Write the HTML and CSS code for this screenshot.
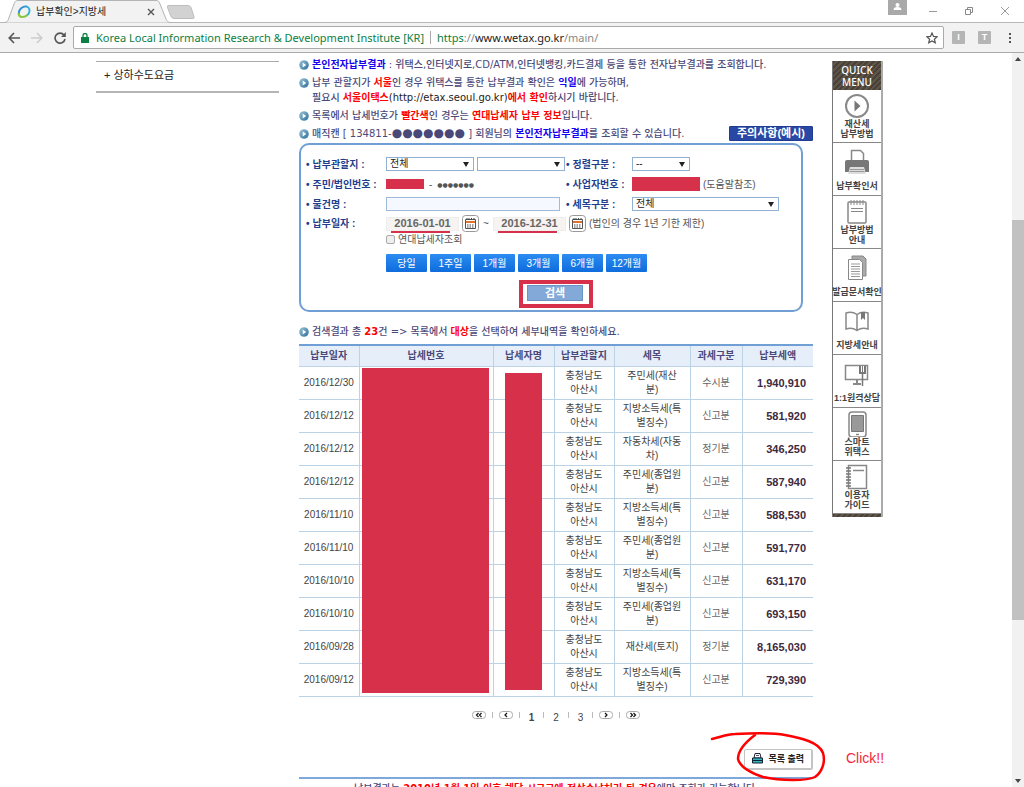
FILE: index.html
```
<!DOCTYPE html>
<html lang="ko">
<head>
  <meta charset="utf-8" />
  <meta name="viewport" content="width=device-width, initial-scale=1.0"/>
  <title>납부확인>지방세</title>
  <link rel="stylesheet" href="styles.css">
</head>
<body>

  <!-- Icons -->
  <svg class="defs" aria-hidden="true">
    <defs>
      <linearGradient id="bulletFill" x1="0" y1="0" x2="1" y2="1">
        <stop offset="0" stop-color="#9cc3d6"/>
        <stop offset="1" stop-color="#2a6f9c"/>
      </linearGradient>
      <symbol id="bullet" viewBox="0 0 10 10">
        <circle cx="5" cy="5" r="4.8" fill="url(#bulletFill)"/>
        <path d="M3.7 2.4 7.2 5 3.7 7.6z" fill="#fff"/>
      </symbol>
      <symbol id="calendar" viewBox="0 0 17 17">
        <rect x=".5" y=".5" width="16" height="16" rx="3" fill="#fff" stroke="#999"/>
        <path d="M3.5 4.5h10v9h-10z" fill="#fff" stroke="#555"/>
        <path d="M4 6h9v2H4z" fill="#e0722c"/>
        <path d="M5 3v2M7 3v2M9.500 3v2M12 3v2M5 10h1.500M7.500 10h1.500M10 10h1.500M5 12h1.500M7.500 12h1.500M10 12h1.500" stroke="#444"/>
      </symbol>
    </defs>
  </svg>

  <header class="browser">
    <div class="tab-strip">
      <div class="tab">
        <svg class="tab-shape" viewBox="0 0 168 23" aria-hidden="true">
          <path d="M0 22.500C3 22.500 3.500 21.500 4.500 19L10 4C11 1 12 .5 14 .5H152C154 .5 155 1 156 4L162 19C163 21.500 164 22.500 168 22.500" fill="#f2f2f2" stroke="#b4b4b4"/>
        </svg>
        <svg class="favicon" viewBox="0 0 14 14" aria-hidden="true">
          <path d="M2 9C1 4 6 1 10 1.500" fill="none" stroke="#2f8fd8" stroke-width="1.800"/>
          <path d="M9.500 1.500C14 3 13 8 10 10.500" fill="none" stroke="#28b3d6" stroke-width="1.800"/>
          <path d="M1.500 8C1.500 13 7 13 10.500 10" fill="none" stroke="#8cc63f" stroke-width="2"/>
        </svg>
        <span class="tab-title">납부확인&gt;지방세</span>
        <button class="plain tab-close" aria-label="탭 닫기">
          <svg width="8" height="8" viewBox="0 0 8 8"><path d="M1 1l6 6M7 1L1 7" stroke="#555" stroke-width="1.400"/></svg>
        </button>
      </div>
      <button class="plain new-tab" aria-label="새 탭">
        <svg width="28" height="14" viewBox="0 0 28 14"><path d="M1 .5h20q2 0 3 2l3 9q.5 2-1 2H7q-2 0-3-2L.5 2.500Q0 .5 1 .5z" fill="#d2d2d2" stroke="#bdbdbd"/></svg>
      </button>
      <div class="window-buttons">
        <button class="plain user" aria-label="사용자">
          <svg width="19" height="15" viewBox="0 0 19 15"><path d="M0 0h19v15H0z" fill="#a9a9a9"/><circle cx="9.500" cy="5" r="2" fill="#fff"/><path d="M5.500 10q0-3 4-3t4 3z" fill="#fff"/></svg>
        </button>
        <button class="plain" aria-label="최소화"><svg width="10" height="10" viewBox="0 0 10 10"><path d="M1 5.500h8" stroke="#999"/></svg></button>
        <button class="plain" aria-label="이전 크기로"><svg width="10" height="10" viewBox="0 0 10 10"><path d="M1.500 3.500h5v5h-5zM3.500 3V1.500h5v5H7" fill="none" stroke="#888"/></svg></button>
        <button class="plain" aria-label="닫기"><svg width="10" height="10" viewBox="0 0 10 10"><path d="M1 1l8 8M9 1L1 9" stroke="#999"/></svg></button>
      </div>
    </div>
    <div class="toolbar">
      <button class="plain" aria-label="뒤로"><svg width="12" height="12" viewBox="0 0 12 12"><path d="M6 1L1.200 6 6 11M1.500 6H12" fill="none" stroke="#555" stroke-width="1.600"/></svg></button>
      <button class="plain" aria-label="앞으로"><svg width="12" height="12" viewBox="0 0 12 12"><path d="M6 1l4.800 5L6 11M10.500 6H0" fill="none" stroke="#ccc" stroke-width="1.600"/></svg></button>
      <button class="plain" aria-label="새로고침"><svg width="12" height="12" viewBox="0 0 12 12"><path d="M10 3A5 5 0 1 0 11 7" fill="none" stroke="#555" stroke-width="1.600"/><path d="M11.800 0v5H7z" fill="#555"/></svg></button>
      <div class="omnibox">
        <svg width="8" height="10" viewBox="0 0 8 10" aria-hidden="true"><path d="M0 4h8v6H0z" fill="#0b8043"/><path d="M2 4V2.500a2 2 0 0 1 4 0V4" fill="none" stroke="#0b8043" stroke-width="1.300"/></svg>
        <span class="company">Korea Local Information Research &amp; Development Institute [KR]</span>
        <span class="url" role="textbox" aria-label="주소"><span class="scheme">https</span>://<b>www.wetax.go.kr</b>/main/</span>
        <button class="plain star" aria-label="북마크"><svg width="12" height="12" viewBox="0 0 12 12"><path d="M6 1l1.500 3.400 3.700.3-2.800 2.500.9 3.600L6 8.900l-3.300 1.900.9-3.600L.8 4.700l3.700-.3z" fill="none" stroke="#555" stroke-width="1.200"/></svg></button>
      </div>
      <button class="plain ext">I</button>
      <button class="plain ext">T</button>
      <button class="plain" aria-label="메뉴"><svg width="12" height="12" viewBox="0 0 12 12"><path d="M5 1h2v2H5zM5 5h2v2H5zM5 9h2v2H5z" fill="#555"/></svg></button>
    </div>
  </header>

  <div class="viewport">
    <div class="page">

      <nav class="side-menu">
        <a href="#"><span class="plus">+</span>상하수도요금</a>
      </nav>

      <main class="content">
        <ul class="notes">
          <li><svg class="bullet"><use href="#bullet"/></svg><p><b class="blue">본인전자납부결과</b> : 위택스,인터넷지로,CD/ATM,인터넷뱅킹,카드결제 등을 통한 전자납부결과를 조회합니다.</p></li>
          <li><svg class="bullet"><use href="#bullet"/></svg><p>납부 관할지가 <b class="red">서울</b>인 경우 위택스를 통한 납부결과 확인은 <b class="blue">익일</b>에 가능하며,<br>필요시 <b class="red">서울이택스</b><span class="link">(http://etax.seoul.go.kr)</span><b class="red">에서 확인</b>하시기 바랍니다.</p></li>
          <li><svg class="bullet"><use href="#bullet"/></svg><p>목록에서 납세번호가 <b class="red">빨간색</b>인 경우는 <b class="red">연대납세자 납부 정보</b>입니다.</p></li>
          <li><svg class="bullet"><use href="#bullet"/></svg><p>매직캔 [ 134811-<span class="dots">●●●●●●●</span> ] 회원님의 <b class="blue">본인전자납부결과</b>를 조회할 수 있습니다.</p><button class="example-btn">주의사항(예시)</button></li>
        </ul>

        <form class="search-box">
          <div class="fields">
            <label for="region">납부관할지 :</label>
            <div class="field">
              <select id="region"><option>전체</option></select>
              <select aria-label="세부 관할지"><option></option></select>
            </div>
            <label for="sort">정렬구분 :</label>
            <div class="field"><select id="sort" class="short"><option>--</option></select></div>

            <span class="label">주민/법인번호 :</span>
            <div class="field"><span class="redact id-front"></span><span class="dash">-</span><span class="mask">●●●●●●●</span></div>
            <span class="label">사업자번호 :</span>
            <div class="field"><span class="redact biz-no"></span><span>(도움말참조)</span></div>

            <label for="item">물건명 :</label>
            <div class="field"><input type="text" id="item"></div>
            <label for="tax">세목구분 :</label>
            <div class="field"><select id="tax" class="long"><option>전체</option></select></div>

            <label for="from">납부일자 :</label>
            <div class="field wide">
              <span class="date"><input type="text" id="from" value="2016-01-01"></span>
              <button type="button" class="plain" aria-label="시작일 선택"><svg class="cal"><use href="#calendar"/></svg></button>
              <span class="tilde">~</span>
              <span class="date"><input type="text" aria-label="종료일" value="2016-12-31"></span>
              <button type="button" class="plain" aria-label="종료일 선택"><svg class="cal"><use href="#calendar"/></svg></button>
              <span>(법인의 경우 1년 기한 제한)</span>
            </div>
            <div class="field check"><input type="checkbox" id="joint"><label for="joint" class="joint">연대납세자조회</label></div>
            <div class="field periods">
              <button type="button">당일</button>
              <button type="button">1주일</button>
              <button type="button">1개월</button>
              <button type="button">3개월</button>
              <button type="button">6개월</button>
              <button type="button">12개월</button>
            </div>
          </div>
          <div class="submit-row">
            <div class="submit-mark"><button type="button" class="submit">검색</button></div>
          </div>
        </form>

        <div class="result-title"><svg class="bullet"><use href="#bullet"/></svg><p>검색결과 총 <b class="red">23</b>건 =&gt; 목록에서 <b class="red">대상</b>을 선택하여 세부내역을 확인하세요.</p></div>

        <div class="table-wrap">
          <table>
            <colgroup>
              <col class="c-date"><col class="c-no"><col class="c-name"><col class="c-region"><col class="c-tax"><col class="c-kind"><col class="c-amount">
            </colgroup>
            <thead>
              <tr><th>납부일자</th><th>납세번호</th><th>납세자명</th><th>납부관할지</th><th>세목</th><th>과세구분</th><th>납부세액</th></tr>
            </thead>
            <tbody>
              <tr><td>2016/12/30</td><td></td><td></td><td>충청남도<br>아산시</td><td>주민세(재산<br>분)</td><td class="kind">수시분</td><td class="amount">1,940,910</td></tr>
              <tr><td>2016/12/12</td><td></td><td></td><td>충청남도<br>아산시</td><td>지방소득세(특<br>별징수)</td><td class="kind">신고분</td><td class="amount">581,920</td></tr>
              <tr><td>2016/12/12</td><td></td><td></td><td>충청남도<br>아산시</td><td>자동차세(자동<br>차)</td><td class="kind">정기분</td><td class="amount">346,250</td></tr>
              <tr><td>2016/12/12</td><td></td><td></td><td>충청남도<br>아산시</td><td>주민세(종업원<br>분)</td><td class="kind">신고분</td><td class="amount">587,940</td></tr>
              <tr><td>2016/11/10</td><td></td><td></td><td>충청남도<br>아산시</td><td>지방소득세(특<br>별징수)</td><td class="kind">신고분</td><td class="amount">588,530</td></tr>
              <tr><td>2016/11/10</td><td></td><td></td><td>충청남도<br>아산시</td><td>주민세(종업원<br>분)</td><td class="kind">신고분</td><td class="amount">591,770</td></tr>
              <tr><td>2016/10/10</td><td></td><td></td><td>충청남도<br>아산시</td><td>지방소득세(특<br>별징수)</td><td class="kind">신고분</td><td class="amount">631,170</td></tr>
              <tr><td>2016/10/10</td><td></td><td></td><td>충청남도<br>아산시</td><td>주민세(종업원<br>분)</td><td class="kind">신고분</td><td class="amount">693,150</td></tr>
              <tr><td>2016/09/28</td><td></td><td></td><td>충청남도<br>아산시</td><td>재산세(토지)</td><td class="kind">정기분</td><td class="amount">8,165,030</td></tr>
              <tr><td>2016/09/12</td><td></td><td></td><td>충청남도<br>아산시</td><td>지방소득세(특<br>별징수)</td><td class="kind">신고분</td><td class="amount">729,390</td></tr>
            </tbody>
          </table>
          <div class="redact cover-no"></div>
          <div class="redact cover-name"></div>
        </div>

        <nav class="paging">
          <a href="#" aria-label="처음"><svg width="14" height="8" viewBox="0 0 14 8"><rect x=".5" y=".5" width="13" height="7" rx="3" fill="#fff" stroke="#aaa"/><path d="M6.500 2L4.500 4l2 2M9.500 2l-2 2 2 2" fill="none" stroke="#111" stroke-width="1.200"/></svg></a>
          <i></i>
          <a href="#" aria-label="이전"><svg width="14" height="8" viewBox="0 0 14 8"><rect x=".5" y=".5" width="13" height="7" rx="3" fill="#fff" stroke="#aaa"/><path d="M8 2L6 4l2 2" fill="none" stroke="#111" stroke-width="1.200"/></svg></a>
          <i></i>
          <a href="#" class="num on">1</a>
          <i></i>
          <a href="#" class="num">2</a>
          <i></i>
          <a href="#" class="num">3</a>
          <i></i>
          <a href="#" aria-label="다음"><svg width="14" height="8" viewBox="0 0 14 8"><rect x=".5" y=".5" width="13" height="7" rx="3" fill="#fff" stroke="#aaa"/><path d="M6 2l2 2-2 2" fill="none" stroke="#111" stroke-width="1.200"/></svg></a>
          <i></i>
          <a href="#" aria-label="마지막"><svg width="14" height="8" viewBox="0 0 14 8"><rect x=".5" y=".5" width="13" height="7" rx="3" fill="#fff" stroke="#aaa"/><path d="M4.500 2l2 2-2 2M7.500 2l2 2-2 2" fill="none" stroke="#111" stroke-width="1.200"/></svg></a>
        </nav>

        <div class="actions">
          <button class="print">
            <svg width="11" height="11" viewBox="0 0 11 11" aria-hidden="true"><path d="M3 .5h5l1 4.500H2z" fill="#fff" stroke="#223"/><path d="M.5 5h10v5H.5z" fill="#35b5bd" stroke="#123"/><path d="M1 7.500h9" stroke="#123"/><path d="M4 2.500h3" stroke="#557"/></svg>
            목록 출력
          </button>
          <svg class="scribble" viewBox="0 0 120 54" aria-hidden="true">
            <path d="M3 8C12 6 18 3 26 3C46 2 66 2 76 4C92 7 110 11 114 22C117 32 112 42 106 46C98 50 72 50 54 46C42 42 31 36 29 28C29 18 38 10 46 4"/>
          </svg>
          <span class="click">Click!!</span>
        </div>

        <p class="footnote">납부결과는 <b class="red">2010년 1월 1일 이후 해당 시군구에 정상수납처리 된 경우</b>에만 조회가 가능합니다.</p>
      </main>

      <aside class="quick">
        <h2>QUICK<br>MENU</h2>
        <a href="#"><svg viewBox="0 0 26 26"><circle cx="13" cy="13" r="11" fill="none" stroke="#888" stroke-width="2"/><path d="M10.500 7.500v11l6-5.500z" fill="#777"/></svg>재산세<br>납부방법</a>
        <a href="#" class="one"><svg viewBox="0 0 26 26"><path d="M7.500 12V1.500h9l3 3V12" fill="#fff" stroke="#888" stroke-width="1.500"/><path d="M3 11h20q2 0 2 2v10H1V13q0-2 2-2z" fill="#777"/><path d="M6 18h14l2 7H4z" fill="#ddd"/><path d="M6 20.500h14M5.500 22.500h15" stroke="#999"/></svg>납부확인서</a>
        <a href="#"><svg viewBox="0 0 26 26"><rect x="4" y="3" width="18" height="21" rx="1" fill="none" stroke="#888" stroke-width="1.500"/><path d="M7 1v5M10 1v5M13 1v5M16 1v5M19 1v5" stroke="#888"/><path d="M7 9.500h12M7 12.500h12" stroke="#888"/></svg>납부방법<br>안내</a>
        <a href="#" class="one"><svg viewBox="0 0 26 26"><path d="M8 4V1h11l3 3v17h-3" fill="#aaa" stroke="#888"/><path d="M4.500 4.500h11l3 3v17h-14z" fill="#fff" stroke="#888"/><path d="M7 9h9M7 11.500h9M7 14h9M7 16.500h9M7 19h9M7 21.500h9" stroke="#999"/></svg>발급문서확인</a>
        <a href="#" class="one"><svg viewBox="0 0 26 26"><path d="M2 5q6-2 11 1.500Q18 3 24 5v16q-6-2-11 1.500Q8 19 2 21zM13 6.500v16" fill="none" stroke="#888" stroke-width="1.500"/><path d="M17 4h4v8l-2-2-2 2z" fill="#777"/></svg>지방세안내</a>
        <a href="#" class="one"><svg viewBox="0 0 26 26"><path d="M1.500 4.500h22v14h-22z" fill="none" stroke="#888" stroke-width="1.500"/><path d="M9 23h8M13 19v4" stroke="#888" stroke-width="2"/><path d="M15 5h7v8h-7z" fill="#777"/><path d="M17.500 5v6M19.500 5v6" stroke="#fff"/><path d="M18.500 13v12" stroke="#777" stroke-width="1.500"/></svg>1:1원격상담</a>
        <a href="#"><svg viewBox="0 0 26 26"><rect x="5" y="1" width="17" height="25" rx="3" fill="#fff" stroke="#888" stroke-width="1.500"/><path d="M7.500 4.500h12v16h-12z" fill="#999" stroke="#777"/><path d="M12 23.500h3" stroke="#888" stroke-width="1.500"/></svg>스마트<br>위택스</a>
        <a href="#"><svg viewBox="0 0 26 26"><path d="M4.500 1.500h18v23h-18z" fill="#fff" stroke="#888" stroke-width="1.500"/><path d="M2 4h5M2 7h5M2 10h5M2 13h5M2 16h5M2 19h5M2 22h5" stroke="#777" stroke-width="1.300"/><path d="M9 6.500h11" stroke="#888" stroke-width="1.500"/></svg>이용자<br>가이드</a>
        <div class="quick-end"></div>
      </aside>

    </div>

    <div class="scrollbar" aria-hidden="true">
      <svg width="6" height="4" viewBox="0 0 6 4"><path d="M0 4l3-4 3 4z" fill="#444"/></svg>
      <div class="track"><div class="thumb"></div></div>
      <svg width="6" height="4" viewBox="0 0 6 4"><path d="M0 0h6L3 4z" fill="#444"/></svg>
    </div>
  </div>

</body>
</html>
```
FILE: styles.css
```
:root {
  --text:   #4a4878;
  --label:  #1f3f8c;
  --line:   #bcd3e6;
  --frame:  #6f9fd4;
  --redact: #d6304b;
}
*, *::before, *::after { box-sizing: border-box; margin:0; padding:0; }
body {
  font-family: "Liberation Sans","Noto Sans CJK KR",sans-serif;
  font-size:11px;line-height:15px;
  color:var(--text);background:#fff;
  height:100vh;overflow:hidden;
  display:flex;flex-direction:column;
}
button, input, select { font:inherit;color:inherit; }
button { cursor:pointer;white-space:nowrap; }
a { color:inherit;text-decoration:none; }
ul { list-style:none; }
svg { display:block;flex:none; }
.defs { position:absolute;width:0;height:0; }
.plain { border:none;background:none;display:flex;align-items:center;justify-content:center; }
.blue { color:#1400f0; }
.red { color:#f00; }
.link { color:#222; }
.redact { background:var(--redact);flex:none; }

/* Browser window */
.browser { flex:none;border-bottom:1px solid #aaa; }
.tab-strip { display:flex;height:23px;padding-left:4px;border-bottom:1px solid #b8b8b8; }
.tab {
  position:relative;width:163px;height:23px;
  display:flex;align-items:center;gap:5px;padding:0 12px 0 13px;
}
.tab-shape { position:absolute;left:0;top:0;width:168px;height:23px; }
.favicon { position:relative;width:14px;height:14px; }
.tab-title { position:relative;font-size:10px;color:#222;flex:1;white-space:nowrap; }
.tab-close { position:relative; }
.new-tab { height:24px; }
.window-buttons { display:flex;gap:26px;margin-left:auto;padding-right:14px;align-items:center; }
.window-buttons .user { align-self:flex-start;margin-right:-5px; }
.toolbar { display:flex;align-items:center;gap:11px;height:29px;padding:0 8px;background:#f2f2f2; }
.omnibox {
  flex:1;display:flex;align-items:center;height:23px;margin:0 -3px 0 -4px;
  padding:0 5px 0 7px;background:#fff;border:1px solid #aaa;border-radius:2px;
  font-family:"Noto Sans",sans-serif;font-size:11px;
}
.company { margin-left:7px;padding-right:6px;border-right:1px solid #aaa;color:#0b8043;line-height:13px;white-space:nowrap; }
.url { margin-left:6px;color:#888; }
.url b { font-weight:400;color:#222; }
.url .scheme { color:#0b8043; }
.star { margin-left:auto; }
.ext { width:13px;height:13px;background:#b5b5b5;border-radius:1px;color:#fff;font-size:9px;font-weight:700;margin-right:2px; }

.viewport { flex:1;display:flex;min-height:0; }
.page {
  flex:1;min-width:0;overflow:hidden;
  display:grid;grid-template-columns:183px minmax(0,514px) 51px;
  column-gap:20px;align-items:start;padding:4px 0 0 96px;
}
.scrollbar {
  width:12px;background:#f1f1f1;
  display:flex;flex-direction:column;align-items:center;padding:4px 0;
}
.track { flex:1;width:100%;padding:159px 0; }
.thumb { height:100%;background:#c1c1c1; }

.side-menu { margin-top:4px;border-top:1px solid #aaa;border-bottom:2px solid #b5b5b5; }
.side-menu a { display:flex;gap:3px;padding:6px 8px 8px;color:#222; }

/* Notes */
.notes, .result-title, .footnote { font-family:"DejaVu Sans","Noto Sans CJK KR",sans-serif;font-size:10px;font-weight:500; }
.notes li { display:flex;gap:3px;margin-bottom:3px; }
.notes li:last-child { margin-bottom:2px; }
.notes p, .result-title p { white-space:nowrap; }
.bullet { width:10px;height:10px;margin-top:3px; }
.dots { font-size:12px;line-height:12px; }
.example-btn {
  margin-left:auto;padding:0 7px;height:15px;line-height:13px;
  font-family:"Liberation Sans","Noto Sans CJK KR",sans-serif;font-size:11px;
  border:1px solid #1f3c92;border-radius:1px;background:#2848a4;color:#fff;font-weight:700;
}

/* Search form */
.search-box {
  margin-right:10px;padding:9px 5px 2px;
  border:2px solid var(--frame);border-radius:10px;
}
.fields {
  display:grid;grid-template-columns:80px 180px 66px minmax(0,1fr);
  grid-template-rows:20px 20px 20px 19px 13px 34px;align-items:center;
}
.fields > label, .label { font-size:10px;font-weight:700;color:var(--label);white-space:nowrap; }
.fields > label::before, .label::before { content:"•";margin-right:3px; }
.field { display:flex;align-items:center;gap:3px;color:#555;font-size:10px;white-space:nowrap; }
.wide, .check, .periods { grid-column:2 / -1; }
.field select {
  appearance:none;width:88px;height:14px;padding:0 3px;
  border:1px solid #8fb0d3;border-radius:0;color:#222;line-height:12px;
  background:#fff url("data:image/svg+xml,%3Csvg xmlns='http://www.w3.org/2000/svg' width='6' height='5'%3E%3Cpath d='M0 0h6L3 5z' fill='%23222'/%3E%3C/svg%3E") no-repeat right 4px center;
}
.field select.short { width:58px; }
.field select.long { width:147px; }
.field input[type=text] { width:174px;height:14px;padding:0 3px;border:1px solid #9dbbd9;background:#f5f9ff; }
.id-front { width:38px;height:10px; }
.dash { padding:0 2px; }
.mask { font-family:"DejaVu Sans",sans-serif;font-size:6px; }
.biz-no { width:68px;height:14px; }
.date { position:relative; }
.field .date input { display:block;width:73px;background:#f6f3f1;border-color:#eee;text-align:center;font-size:11px;font-weight:700;color:#666; }
.date::after { content:"";position:absolute;left:5px;right:9px;top:14px;height:2px;background:var(--redact); }
.cal { width:17px;height:17px; }
.tilde { width:8px;text-align:center; }
.check input { appearance:none;width:9px;height:9px;border:1px solid #aaa;border-radius:2px;background:#eee; }
.periods button { width:41px;height:18px;border:none;border-radius:1px;background:linear-gradient(#2b8cf2,#0f6cdc);color:#fff; }
.submit-row { display:flex;justify-content:center;padding-left:10px; }
.submit-mark { width:74px;padding:1px 6px 3px 4px;border:4px solid var(--redact); }
.submit { display:block;width:56px;height:16px;line-height:14px;border:1px solid #6b94c6;background:#82a9d8;color:#fff;font-weight:700; }

/* Result table */
.result-title { display:flex;gap:3px;margin:12px 0 5px; }
.table-wrap { position:relative; }
table { width:100%;table-layout:fixed;border-collapse:collapse;border-top:2px solid var(--frame);font-size:10px;line-height:14px;color:#444; }
th, td { text-align:center;white-space:nowrap;border-left:1px solid var(--line);border-bottom:1px solid var(--line); }
th:first-child, td:first-child { border-left:none; }
th { height:21px;background:#e6eef9;color:var(--text);font-weight:700; }
td { height:33px; }
.c-date { width:60px; }
.c-no { width:134px; }
.c-name { width:61px; }
.c-region { width:60px; }
.c-tax { width:76px; }
.c-kind { width:52px; }
.kind { color:#666; }
td.amount { padding-right:7px;text-align:right;font-size:11px;font-weight:700;color:#3d2940; }
.cover-no { position:absolute;left:63px;top:24px;bottom:4px;width:127px; }
.cover-name { position:absolute;left:206px;top:29px;bottom:7px;width:37px; }

.paging { display:flex;justify-content:center;align-items:center;gap:6px;height:20px;margin-top:8px;font-size:10px;color:#444; }
.paging i { width:1px;height:6px;background:#bbb; }
.num { padding:5px 3px 0; }
.num.on { font-weight:700; }

.actions { position:relative;display:flex;justify-content:flex-end;margin-top:24px;padding-bottom:7px;border-bottom:2px solid #7ea8dc; }
.print {
  display:flex;align-items:center;gap:5px;height:21px;padding:0 7px;
  border:1px solid #c4c4c4;border-right-width:2px;border-bottom-width:2px;border-radius:2px;
  background:#fff;color:#222;font-size:9px;font-weight:700;line-height:14px;
}
.scribble { position:absolute;right:-16px;top:-18px;width:120px;height:54px; }
.scribble path { fill:none;stroke:#f00;stroke-width:2.500;stroke-linecap:round; }
.click { position:absolute;left:100%;top:2px;margin-left:33px;font-size:14px;color:#f5283c; }
.footnote { margin-top:2px;padding-left:55px;white-space:nowrap; }

/* Quick menu */
.quick { margin:4px 0 0 -1px;width:51px;border:1px solid #777;border-right:2px solid #aaa;border-top:none;border-bottom:none; }
.quick h2, .quick-end { background:repeating-linear-gradient(135deg,#4a4238 0 2px,#5f564a 2px 4px); }
.quick h2 { height:29px;padding-top:3px;font:500 10px/12px "Noto Sans",sans-serif;color:#fff;text-align:center; }
.quick a {
  display:flex;flex-direction:column;align-items:center;height:53px;padding-top:3px;
  border-bottom:1px solid #888;
  font-size:9px;font-weight:700;line-height:10px;color:#444;text-align:center;white-space:nowrap;
}
.quick a svg { width:26px;height:26px; }
.quick .one { padding-top:6px; }
.quick .one svg { margin-bottom:6px; }
.quick-end { height:3px; }
```
